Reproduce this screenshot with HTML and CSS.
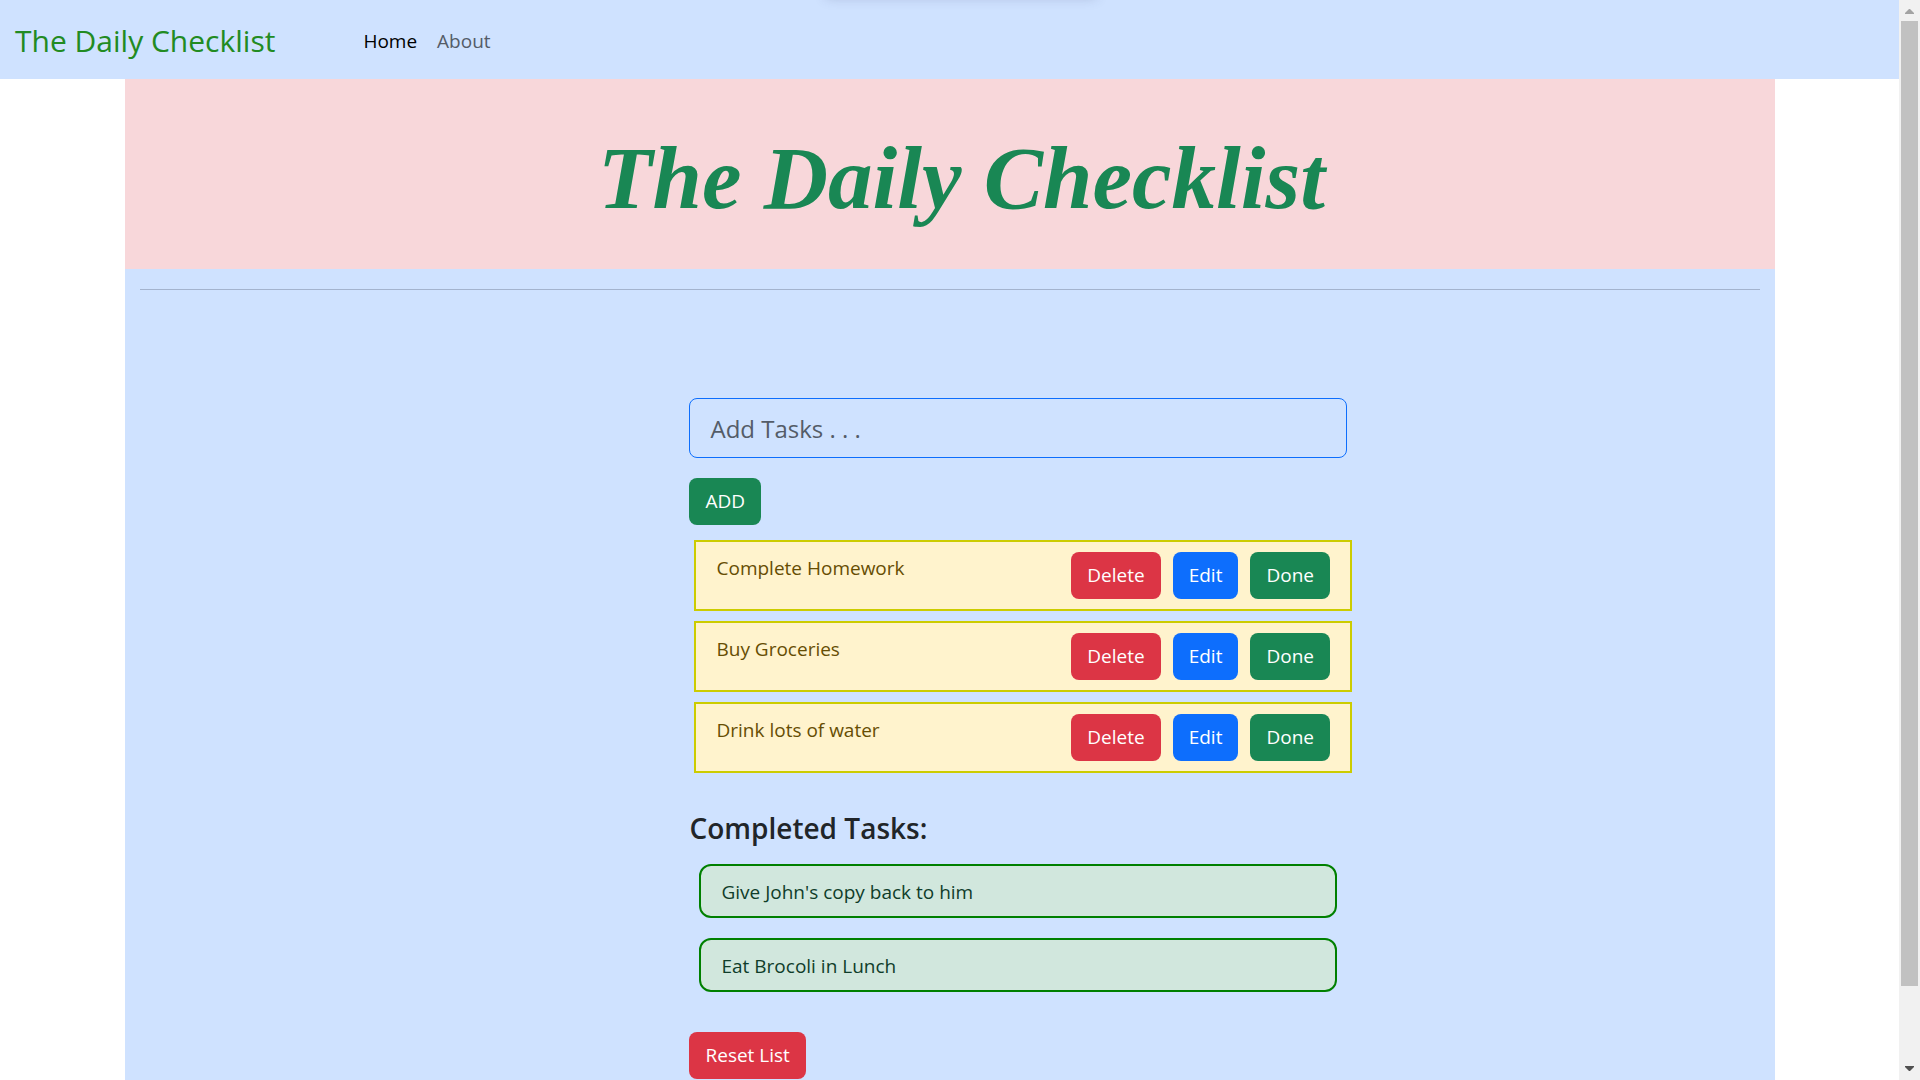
FILE: index.html
```html
<!DOCTYPE html>
<html lang="en">
<head>
  <meta charset="utf-8">
  <meta name="viewport" content="width=device-width, initial-scale=1">
  <title>The Daily Checklist</title>
  <link rel="stylesheet" href="styles.css">
</head>
<body>
  <div class="page">
    <nav class="navbar">
      <a class="brand" href="#">The Daily Checklist</a>
      <a class="nav-link active" href="#">Home</a>
      <a class="nav-link" href="#">About</a>
    </nav>
    <main class="container">
      <header class="banner">
        <h1 class="title">The Daily Checklist</h1>
      </header>
      <hr class="divider">
      <div class="content">
        <input class="task-input" type="text" aria-label="Add Tasks" placeholder="Add Tasks . . .">
        <button class="btn btn-green" type="button">ADD</button>
        <ul class="tasks">
          <li class="task">
            <span class="task-name">Complete Homework</span>
            <button class="btn btn-red" type="button">Delete</button>
            <button class="btn btn-blue" type="button">Edit</button>
            <button class="btn btn-green" type="button">Done</button>
          </li>
          <li class="task">
            <span class="task-name">Buy Groceries</span>
            <button class="btn btn-red" type="button">Delete</button>
            <button class="btn btn-blue" type="button">Edit</button>
            <button class="btn btn-green" type="button">Done</button>
          </li>
          <li class="task">
            <span class="task-name">Drink lots of water</span>
            <button class="btn btn-red" type="button">Delete</button>
            <button class="btn btn-blue" type="button">Edit</button>
            <button class="btn btn-green" type="button">Done</button>
          </li>
        </ul>
        <h2 class="subtitle">Completed Tasks:</h2>
        <ul class="completed">
          <li class="completed-task">Give John's copy back to him</li>
          <li class="completed-task">Eat Brocoli in Lunch</li>
        </ul>
        <button class="btn btn-red" type="button">Reset List</button>
      </div>
    </main>
  </div>
  <div class="scrollbar" aria-hidden="true">
    <svg class="arrow" viewBox="0 0 9 5" fill="#a3a3a3"><path d="M4 0h1l4 4v1H0V4z"/></svg>
    <div class="track"><div class="thumb"></div></div>
    <svg class="arrow" viewBox="0 0 9 5" fill="#505050"><path d="M0 0h9v1L5 5H4L0 1z"/></svg>
  </div>
</body>
</html>
```

FILE: styles.css
```css
* { box-sizing: border-box; }

body {
  margin: 0;
  display: flex;
  height: 100vh;
  overflow: hidden;
  background: #fff;
  color: #212529;
  font: 19px/30px "Open Sans", "Noto Sans", sans-serif;
}

.page {
  position: relative;
  flex: 1;
  display: flex;
  flex-direction: column;
  overflow: hidden;
}

/* soft shadow along the top edge */
.page::before {
  content: "";
  position: absolute;
  top: -22px;
  left: 50%;
  width: 270px;
  height: 20px;
  margin-left: -124px;
  box-shadow: 0 0 12px rgba(70, 80, 120, 0.25);
}

.navbar {
  display: flex;
  align-items: center;
  flex-shrink: 0;
  gap: 20px;
  padding: 18px 15px 16px;
  background: #cfe2ff;
}

.brand {
  margin-right: 68px;
  color: #228b22;
  font-size: 30px;
  line-height: 45px;
  text-decoration: none;
}

.nav-link {
  color: #545c68;
  text-decoration: none;
}

.nav-link.active { color: #000; }

.container {
  flex: 1 0 auto;
  width: 87%;
  max-width: 1650px;
  margin: 0 auto;
  background: #cfe2ff;
}

.banner {
  padding: 24px 20px 16px 44px;
  background: #f8d7da;
  text-align: center;
}

.title {
  margin: 0;
  color: #198754;
  font: italic 700 89px/150px "Brush Script MT", "Segoe Script", "Liberation Serif", cursive;
}

.divider {
  height: 1px;
  margin: 20px 15px 108px;
  border: 0;
  background: #a3b3ce;
}

.content {
  display: flex;
  flex-direction: column;
  align-items: flex-start;
  width: 41.667%;
  margin-left: 33.333%;
  padding: 0 15px;
}

.task-input {
  width: 100%;
  height: 60px;
  margin-bottom: 20px;
  padding: 0 20px;
  border: 1px solid #0d6efd;
  border-radius: 8px;
  background: transparent;
  color: #212529;
  font: 24px/36px "Open Sans", "Noto Sans", sans-serif;
}

.task-input::placeholder {
  color: #545c68;
  opacity: 1;
}

.btn {
  padding: 8px 16px;
  border: 0;
  border-radius: 8px;
  color: #fff;
  font: inherit;
  line-height: 31px;
}

.btn-green { background: #198754; }
.btn-red { background: #dc3545; }
.btn-blue { background: #0d6efd; }

.tasks,
.completed {
  width: 100%;
  margin: 0;
  padding: 0;
  list-style: none;
}

.tasks {
  position: relative;
  left: 5px;
  display: grid;
  gap: 10px;
  margin: 15px 0 35px;
}

.task {
  display: flex;
  align-items: flex-start;
  gap: 12px;
  padding: 10px 20px;
  border: 2px solid #cccc00;
  background: #fff3cd;
  color: #664d03;
}

.task-name {
  flex: 1;
  line-height: 32px;
}

.subtitle {
  margin: 0 0 16px;
  font-size: 28px;
  font-weight: 600;
  line-height: 40px;
}

.completed {
  display: grid;
  gap: 20px;
  padding: 0 10px;
  margin-bottom: 40px;
}

.completed-task {
  padding: 11px 20px 9px;
  border: 2px solid #008000;
  border-radius: 12px;
  background: #d1e7dd;
  color: #0f3d2a;
}

.scrollbar {
  display: flex;
  flex-direction: column;
  align-items: center;
  width: 21px;
  padding: 9px 0;
  background: #f1f1f1;
}

.arrow {
  width: 9px;
  height: 5px;
}

.track {
  flex: 1;
  width: 17px;
  padding: 7px 0;
}

.thumb {
  height: 93%;
  background: #c1c1c1;
}
```
